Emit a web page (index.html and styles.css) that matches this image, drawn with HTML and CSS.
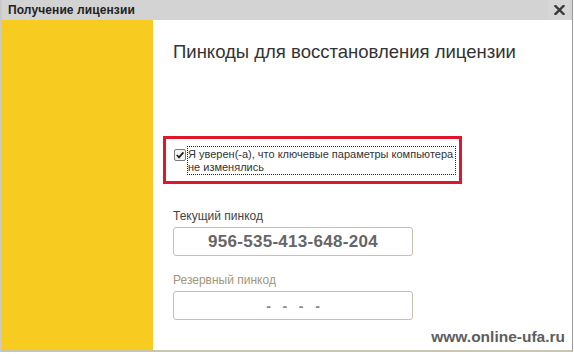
FILE: index.html
```html
<!DOCTYPE html>
<html>
<head>
<meta charset="utf-8">
<link rel="stylesheet" href="styles.css">
</head>
<body>
<div class="window">
  <div class="titlebar">
    <span class="title">Получение лицензии</span>
    <span class="close">
      <svg width="11" height="10" viewBox="0 0 11 10"><path d="M1.5 1 L9.5 9 M9.5 1 L1.5 9" stroke="#3a3a3a" stroke-width="2.4" stroke-linecap="square"/></svg>
    </span>
  </div>
  <div class="content">
    <div class="sidebar"></div>
    <div class="main">
      <h1 class="heading">Пинкоды для восстановления лицензии</h1>
      <div class="confirm">
        <label class="check">
          <span class="box">
            <svg width="10" height="10" viewBox="0 0 10 10"><path d="M1.8 5 L4 7.3 L8.4 2.3" fill="none" stroke="#222" stroke-width="1.8"/></svg>
          </span>
          <span class="check-text">Я уверен(-а), что ключевые параметры компьютера<br>не изменялись</span>
        </label>
      </div>
      <div class="field-label">Текущий пинкод</div>
      <div class="input"><span class="pin">956-535-413-648-204</span></div>
      <div class="field-label muted">Резервный пинкод</div>
      <div class="input"><span class="dashes">-&nbsp;&nbsp;&nbsp;-&nbsp;&nbsp;&nbsp;-&nbsp;&nbsp;&nbsp;-</span></div>
      <div class="watermark">www.online-ufa.ru</div>
    </div>
  </div>
</div>
</body>
</html>
```
FILE: styles.css
```css
html, body {
  margin: 0;
  padding: 0;
  background: #ffffff;
}
body {
  font-family: "Liberation Sans", Arial, sans-serif;
  width: 574px;
  height: 354px;
  overflow: hidden;
}
.window {
  width: 570px;
  height: 350px;
  border-left: 2px solid #c9c9c9;
  border-right: 1px solid #9a9a9a;
  border-bottom: 2px solid #c9c6b0;
  display: flex;
  flex-direction: column;
  background: #fff;
}
.titlebar {
  height: 20px;
  background: #d3d3d3;
  display: flex;
  align-items: center;
  justify-content: space-between;
  padding: 0 0 0 6px;
}
.title {
  font-weight: bold;
  font-size: 12px;
  color: #222;
  letter-spacing: 0.1px;
}
.close {
  width: 22px;
  height: 20px;
  display: flex;
  align-items: center;
  justify-content: center;
  margin-right: 2px;
  background: #d6d6d6;
}
.content {
  flex: 1;
  display: flex;
}
.sidebar {
  width: 151px;
  background: #f8cb20;
}
.main {
  flex: 1;
  padding: 0 0 0 20px;
  display: flex;
  flex-direction: column;
  position: relative;
}
.heading {
  margin: 21px 0 0 0;
  font-weight: normal;
  font-size: 18.5px;
  line-height: 22px;
  color: #333;
}
.confirm {
  margin: 73px 0 0 -10px;
  width: 293px;
  height: 42px;
  border: 3px solid #e0162c;
  box-sizing: content-box;
  padding: 0;
}
.check {
  display: flex;
  align-items: flex-start;
  margin: 8px 0 0 8px;
}
.box {
  width: 10px;
  height: 10px;
  border: 1px solid #7a7a7a;
  border-radius: 2px;
  background: #f4f4f4;
  display: flex;
  align-items: center;
  justify-content: center;
  margin-top: 2px;
  margin-right: 2px;
}
.check-text {
  font-size: 11px;
  line-height: 13px;
  color: #333;
  width: 267px;
  outline: 1px dotted #222;
  outline-offset: 0;
  padding: 1px 0 0 0;
  height: 27px;
  box-sizing: border-box;
  white-space: nowrap;
}
.field-label {
  margin-top: 25px;
  font-size: 12px;
  line-height: 14px;
  color: #444;
}
.field-label.muted {
  margin-top: 17px;
  color: #a39679;
}
.input {
  margin-top: 4px;
  width: 238px;
  height: 27px;
  border: 1px solid #c6c2a8;
  border-radius: 3px;
  display: flex;
  align-items: center;
  justify-content: center;
}
.pin {
  font-weight: bold;
  font-size: 17px;
  color: #666;
  letter-spacing: 0.3px;
}
.dashes {
  font-size: 14px;
  color: #888;
  font-weight: bold;
}
.watermark {
  position: absolute;
  right: 7px;
  bottom: 4px;
  font-weight: bold;
  font-size: 15.5px;
  color: #5e5e5e;
}
```
